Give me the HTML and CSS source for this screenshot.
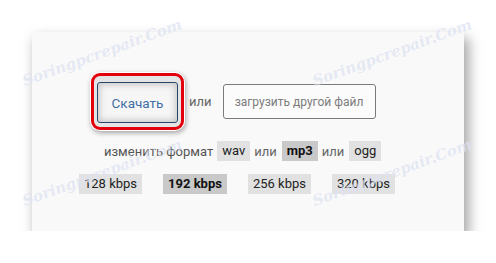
FILE: index.html
```html
<!DOCTYPE html>
<html lang="ru">
<head>
    <meta charset="UTF-8">
    <meta name="viewport" content="width=device-width, initial-scale=1.0">
    <title>Скачать</title>
    <link rel="stylesheet" href="styles.css">
</head>
<body>
    <div class="panel">
        <div class="row row-actions">
            <div class="highlight">
                <button class="btn-download" type="button">Скачать</button>
            </div>
            <span class="or or-first">или</span>
            <button class="btn-upload" type="button">загрузить другой файл</button>
        </div>

        <div class="row row-format">
            <span class="label">изменить формат</span>
            <span class="chip">wav</span>
            <span class="or">или</span>
            <span class="chip chip-active">mp3</span>
            <span class="or">или</span>
            <span class="chip">ogg</span>
        </div>

        <div class="row row-bitrate">
            <span class="chip">128 kbps</span>
            <span class="chip chip-active">192 kbps</span>
            <span class="chip">256 kbps</span>
            <span class="chip">320 kbps</span>
        </div>

        <!-- watermark -->
        <span class="mark mark-tl">Soringpcrepair.Com</span>
        <span class="mark mark-tr">Soringpcrepair.Com</span>
        <span class="mark mark-bl">Soringpcrepair.Com</span>
        <span class="mark mark-br">Soringpcrepair.Com</span>
    </div>
</body>
</html>
```

FILE: styles.css
```css
body {
    margin: 0;
    background: #fff;
    font-family: Roboto, "Liberation Sans", sans-serif;
    font-size: 13px;
}
.panel {
    position: relative;
    margin: 32px 0 0 32px;
    width: 432px;
    height: 199px;
    background: #f9f9f9;
    box-shadow: 4px 7px 12px 1px rgba(0, 0, 0, 0.35);
}
.row {
    display: flex;
    align-items: center;
}
.row-actions {
    padding: 41px 0 0 59px;
}
.highlight {
    border: 3px solid #e3000b;
    border-radius: 9px;
    padding: 6px 3px 4px 3px;
    background: #e4e4e4;
    box-shadow: 0 0 0 1px #fff, 1px 2px 5px 1px rgba(0, 0, 0, 0.35);
}
.btn-download {
    width: 81px;
    height: 41px;
    border: 1px solid #27466b;
    border-radius: 3px;
    background: #f6f6f6;
    box-shadow: inset 0 0 6px 2px #c9c9c9;
    color: #3f6fa5;
    font-family: inherit;
    font-size: 13.5px;
    padding: 0;
}
.or {
    color: #666;
    margin: 0 5px 0 4px;
}
.or-first {
    margin: 0 11px 0 5px;
}
.btn-upload {
    width: 153px;
    height: 35px;
    border: 1px solid #7a7a7a;
    border-radius: 3px;
    background: #fbfbfb;
    color: #7c7c7c;
    font-family: inherit;
    font-size: 12px;
    padding: 0;
}
.row-format {
    padding: 11px 0 0 72px;
}
.label {
    color: #555;
    margin-right: 4px;
}
.chip {
    background: #e1e1e1;
    color: #222;
    line-height: 20px;
    padding: 0 5px;
}
.chip-active {
    background: #c9c9c9;
    color: #111;
    font-weight: bold;
}
.row-bitrate {
    padding: 13px 0 0 47px;
    gap: 21px;
}
.mark {
    position: absolute;
    font-family: "DejaVu Serif", serif;
    font-style: italic;
    font-weight: bold;
    font-size: 15px;
    color: rgba(185, 195, 228, 0.35);
    text-shadow: 0 0 1px rgba(255, 255, 255, 0.6);
    transform: rotate(-20deg);
    transform-origin: left bottom;
    white-space: nowrap;
    pointer-events: none;
}
.mark-tl { left: -6px; top: 40px; }
.mark-tr { left: 284px; top: 40px; }
.mark-bl { left: -6px; top: 160px; }
.mark-br { left: 284px; top: 160px; }
```
